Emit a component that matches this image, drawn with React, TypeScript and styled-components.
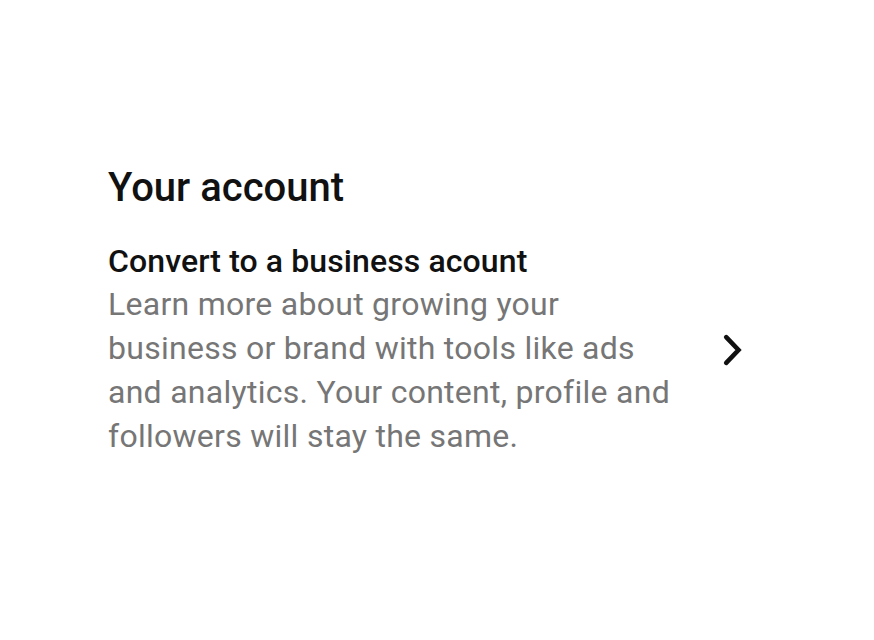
import React from "react";
import styled, { createGlobalStyle } from "styled-components";

const Global = createGlobalStyle`
  html, body { margin: 0; padding: 0; background: #ffffff; }
  body { font-family: Roboto, "Noto Sans", sans-serif; -webkit-font-smoothing: antialiased; }
`;

const Page = styled.div`
  width: 874px;
  height: 640px;
  box-sizing: border-box;
  padding: 164px 0 0 108px;
  background: #fff;
`;

const Title = styled.h1`
  margin: 0 0 29px;
  font-size: 40px;
  line-height: 48px;
  font-weight: 500;
  color: #111;
`;

const Row = styled.div`
  display: flex;
  align-items: center;
  gap: 42px;
`;

const TextCol = styled.div`
  flex: 0 0 572px;
  display: flex;
  flex-direction: column;
`;

const ItemTitle = styled.div`
  font-size: 32px;
  line-height: 41px;
  font-weight: 500;
  letter-spacing: 0.1px;
  color: #111;
`;

const ItemDesc = styled.div`
  font-size: 32px;
  line-height: 44px;
  font-weight: 400;
  letter-spacing: 0.27px;
  color: #767676;
`;

const Chevron = styled.svg`
  width: 24px;
  height: 34px;
  flex: none;
`;

export default function App() {
  return (
    <>
      <Global />
      <Page>
        <Title>Your account</Title>
        <Row>
          <TextCol>
            <ItemTitle>Convert to a business acount</ItemTitle>
            <ItemDesc>
              Learn more about growing your business or brand with tools like ads and analytics. Your content, profile and followers will stay the same.
            </ItemDesc>
          </TextCol>
          <Chevron viewBox="0 0 24 34" fill="none">
            <path d="M4.2 4.2 L16.5 17 L4.2 29.8" stroke="#111" strokeWidth="4.6" strokeLinecap="round" strokeLinejoin="miter" />
          </Chevron>
        </Row>
      </Page>
    </>
  );
}
